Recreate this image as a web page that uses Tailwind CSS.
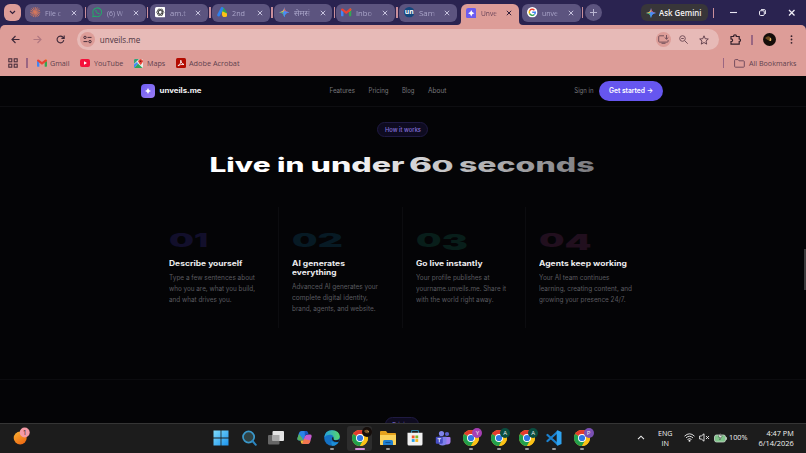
<!DOCTYPE html>
<html lang="en">
<head>
    <meta charset="UTF-8">
    <meta name="viewport" content="width=device-width, initial-scale=1.0">
    <title>unveils.me</title>
    <script src="https://cdn.jsdelivr.net/npm/@tailwindcss/browser@4"></script>
</head>
<body class="w-[806px] h-[453px] overflow-hidden flex flex-col bg-[#040406] font-['Open_Sans','Noto_Sans',sans-serif]">

<!-- Shared icons -->
<svg class="hidden">
    <symbol id="close" viewBox="0 0 6 6"><path d="M.8.8l4.4 4.4M5.2.8L.8 5.2" stroke="currentColor" stroke-width="1" fill="none"/></symbol>
    <symbol id="gemini" viewBox="0 0 12 12">
        <path d="M6 0Q6.6 5.4 12 6Q6.6 6.6 6 12Q5.4 6.6 0 6Q5.4 5.4 6 0Z" fill="#4b8bf4"/>
        <path d="M6 0Q6.6 5.4 12 6H6Z" fill="#e8505b"/>
        <path d="M6 1.5Q5.4 5.4 0 6L6 6.6Z" fill="#f2b83a"/>
        <path d="M0 6Q5.4 6.6 6 12V6Z" fill="#45b36b"/>
        <path d="M6 4Q7 5.2 12 6Q6.6 6.6 6 12Q5 8 4.5 6Z" fill="#4b8bf4"/>
    </symbol>
    <symbol id="gmail" viewBox="0 0 12 9">
        <path d="M0 1.5V8.2Q0 9 .8 9H2.8V3.6Z" fill="#4285f4"/>
        <path d="M12 1.5V8.2Q12 9 11.2 9H9.2V3.6Z" fill="#34a853"/>
        <path d="M9.2.8V4L12 2V1.4Q11.5-.6 9.2.8Z" fill="#fbbc04"/>
        <path d="M0 1.4V2L6 6.5L12 2V1.4Q11.2-.6 9.6.6L6 3.3L2.4.6Q.6-.6 0 1.4Z" fill="#ea4335"/>
    </symbol>
    <symbol id="chrome" viewBox="0 0 16 16">
        <circle cx="8" cy="8" r="8" fill="#fbc116"/>
        <path d="M1.07 4A8 8 0 0 1 14.93 4L8 8Z" fill="#e33b2e"/>
        <path d="M1.07 4A8 8 0 0 0 8 16L11.4 10L8 8Z" fill="#22a04c"/>
        <path d="M8 4H14.93A8 8 0 0 1 8 16L11.5 10Z" fill="#fbc116"/>
        <circle cx="8" cy="8" r="4" fill="#fff"/>
        <circle cx="8" cy="8" r="3.1" fill="#2f77e6"/>
    </symbol>
    <symbol id="spark" viewBox="0 0 8 8"><path d="M4 0Q4.700 3.300 8 4Q4.700 4.700 4 8Q3.300 4.700 0 4Q3.300 3.300 4 0Z" fill="#fff"/></symbol>
    <symbol id="tab-claude" viewBox="0 0 10 10"><path d="M5 0v10M0 5h10M1.4 1.4l7.2 7.2M8.6 1.4L1.4 8.6M3 .4l4 9.2M7 .4L3 9.6M.4 3l9.2 4M.4 7l9.2-4" stroke="#d8785c" stroke-width=".8"/></symbol>
    <symbol id="tab-whatsapp" viewBox="0 0 11 11"><path d="M.7 10.3l.7-2.6A4.6 4.6 0 1 1 3.3 9.6Z" fill="none" stroke="#25a66a" stroke-width="1.1"/><path d="M3.6 3.2q.8-.7 1.1.3q.5.8-.1 1q.6 1.3 1.9 1.9q.5-.8 1.5.1q.2.9-.9 1.2Q4.1 7.2 3.3 4Z" fill="#25a66a"/></symbol>
    <symbol id="tab-gpt" viewBox="0 0 10 10"><rect width="10" height="10" rx="1.6" fill="#fff"/><g fill="none" stroke="#222" stroke-width=".6"><ellipse cx="5" cy="5" rx="3.5" ry="1.7"/><ellipse cx="5" cy="5" rx="3.5" ry="1.7" transform="rotate(60 5 5)"/><ellipse cx="5" cy="5" rx="3.5" ry="1.7" transform="rotate(120 5 5)"/></g></symbol>
    <symbol id="tab-ads" viewBox="0 0 10 10"><path d="M4 .6Q5.300-.4 6.500.8L9.800 6L7 8L3.600 3Z" fill="#2fa84f"/><path d="M4.800 1.500L1.600 7.500" stroke="#2f80ed" stroke-width="2.800" stroke-linecap="round"/><path d="M5.200 4L9.700 6.200Q10.300 9 8 9.500H6Q3.800 8 5.200 4Z" fill="#fbc116"/></symbol>
    <symbol id="tab-un" viewBox="0 0 10 10"><circle cx="5" cy="5" r="5" fill="#14477d"/><text x="5" y="6.900" font-size="6.500" font-weight="700" fill="#fff" text-anchor="middle">un</text></symbol>
    <symbol id="tab-unveils" viewBox="0 0 10 10"><rect width="10" height="10" rx="2.200" fill="#6b5cf0"/><path d="M5 2Q5.500 4.500 8 5Q5.500 5.500 5 8Q4.500 5.500 2 5Q4.500 4.500 5 2Z" fill="#fff"/></symbol>
    <symbol id="tab-google" viewBox="0 0 11 11"><circle cx="5.5" cy="5.5" r="5.5" fill="#fff"/><g fill="none" stroke-width="1.500"><path d="M7.800 3.400A3.200 3.200 0 0 0 2.700 4" stroke="#ea4335"/><path d="M2.700 4A3.200 3.200 0 0 0 2.700 7" stroke="#fbbc04"/><path d="M2.700 7A3.200 3.200 0 0 0 7.700 7.900" stroke="#34a853"/><path d="M7.700 7.900Q8.700 7 8.700 5.500H5.500" stroke="#4285f4"/></g></symbol>
</svg>

<!-- Tab strip -->
<div class="h-[25px] shrink-0 bg-[#2a2350] flex items-center pl-1 text-[7.5px] text-[#aaa5c9]">
    <button class="size-[17px] rounded-[6px] bg-[#dd9d98] flex items-center justify-center shrink-0 mr-1">
        <svg class="w-[7px] h-[5px]" viewBox="0 0 7 5"><path d="M1 1l2.5 2.5L6 1" fill="none" stroke="#33203a" stroke-width="1.2"/></svg>
    </button>

    <div id="tabs" class="h-full flex items-center shrink-0"></div>

    <button class="size-[17px] rounded-full bg-[#5c547f] flex items-center justify-center shrink-0">
        <svg class="size-[7px]" viewBox="0 0 7 7"><path d="M3.5 0v7M0 3.5h7" stroke="#b9b5d0"/></svg>
    </button>

    <!-- window controls -->
    <div class="ml-auto flex items-center">
        <div class="w-[67.5px] h-[17px] rounded-[6px] bg-[#383639] flex items-center pl-[5px]">
            <svg class="size-[10px] shrink-0"><use href="#gemini"/></svg>
            <svg class="w-[43px] h-[12px] ml-[3px]" viewBox="0 0 43 12"><text x="0" y="8.700" font-size="8" font-weight="600" fill="#f1f0f2" textLength="42.500" lengthAdjust="spacingAndGlyphs">Ask Gemini</text></svg>
        </div>
        <i class="w-[1.5px] h-[10px] bg-[#c98f9b] ml-[4.5px]"></i>
        <svg class="w-[7px] h-[7px] ml-[16px]" viewBox="0 0 7 7"><path d="M0 3.500h7" stroke="#e9e7f2" stroke-width="1.100"/></svg>
        <svg class="size-[7px] ml-[22px]" viewBox="0 0 7 7"><rect x=".5" y="1.700" width="4.800" height="4.800" rx="1.200" fill="none" stroke="#e9e7f2"/><path d="M2 .5H5Q6.500.5 6.500 2V5" fill="none" stroke="#e9e7f2" stroke-width=".9"/></svg>
        <svg class="size-[7.5px] ml-[21.5px] mr-[11px] text-[#f1eff8]"><use href="#close"/></svg>
    </div>
</div>

<!-- Browser toolbar -->
<div class="bg-[#2a2350] shrink-0">
    <div class="h-[51px] bg-[#dd9d98] rounded-t-[5px] text-[#5d3f4d]">
        <div class="h-[29px] flex items-center">
            <svg class="size-[9px] ml-[10.5px]" viewBox="0 0 9 9"><path d="M8.500 4.500H1M4.500 1L1 4.500L4.500 8" fill="none" stroke="#3d2838" stroke-width="1.100"/></svg>
            <svg class="size-[9px] ml-[13.5px]" viewBox="0 0 9 9"><path d="M.5 4.500H8M4.500 1L8 4.500L4.500 8" fill="none" stroke="#b07780" stroke-width="1.100"/></svg>
            <svg class="size-[9px] ml-[13.5px]" viewBox="0 0 9 9"><path d="M7.800 5.200A3.400 3.400 0 1 1 7 2.200L8 3.200M8.200.6V3.400H5.400" fill="none" stroke="#3d2838" stroke-width="1.100"/></svg>
            <div class="w-[642.5px] h-[21.5px] ml-[12px] rounded-full bg-[#e7bab7] flex items-center pl-[3px]">
                <span class="size-[15px] rounded-full bg-[#dd9d98] flex items-center justify-center">
                    <svg class="size-[9px]" viewBox="0 0 9 9"><g fill="none" stroke="#4a2f3c" stroke-width="1"><circle cx="2" cy="2.400" r="1.200"/><path d="M4.500 2.400H8.500M.5 6.600H4.500"/><circle cx="7" cy="6.600" r="1.200"/></g></svg>
                </span>
                <svg class="w-[50px] h-[14px] ml-[4px]" viewBox="0 0 50 14"><text x=".8" y="10" font-size="8.600" fill="#4d3442" textLength="40.500" lengthAdjust="spacingAndGlyphs">unveils.me</text></svg>
                <span class="ml-auto size-[15px] rounded-full bg-[#dd9d98] flex items-center justify-center">
                    <svg class="w-[11px] h-[9px]" viewBox="0 0 11 9"><path d="M6 .8H1.500Q.7.800.7 1.600V6.300Q.7 7.100 1.500 7.100H9.300Q10.100 7.100 10.100 6.300V5M3.500 8.300H7.500M8.500 0V4M6.700 2.500L8.500 4.200L10.300 2.500" fill="none" stroke="#74505a" stroke-width="1"/></svg>
                </span>
                <svg class="size-[9px] ml-[8px]" viewBox="0 0 9 9"><g fill="none" stroke="#74505a"><circle cx="3.500" cy="3.500" r="2.800"/><path d="M5.600 5.600L8.700 8.700M2.200 3.500H4.800"/></g></svg>
                <svg class="size-[10px] ml-[11px] mr-[10.5px]" viewBox="0 0 10 10"><path d="M5 .8L6.200 3.700L9.300 4L7 6L7.700 9.100L5 7.500L2.300 9.100L3 6L.7 4L3.800 3.700Z" fill="none" stroke="#5a3a47" stroke-width=".9"/></svg>
            </div>
            <svg class="size-[11px] ml-[11px]" viewBox="0 0 11 11"><path d="M1 2.500H3.700Q3.600.8 5 .8T6.300 2.500H9.200V5Q10.500 5 10.500 6.200T9.200 7.500V10.200H1V7.700Q2.600 7.700 2.600 6.300T1 4.900Z" fill="none" stroke="#33202b" stroke-width="1.200"/></svg>
            <i class="w-[1.5px] h-[10px] bg-[#9a6682] ml-[10px]"></i>
            <svg class="size-[13px] ml-[10px]" viewBox="0 0 13 13"><circle cx="6.500" cy="6.500" r="6.500" fill="#150d0a"/><path d="M2 5Q5 2 7 4L7 8Q4 7 2 5Z" fill="#6b4a20"/><path d="M7 4.500Q9 5 8 8L6.500 8Z" fill="#e2b061"/></svg>
            <svg class="w-[3px] h-[9px] ml-[14.5px]" viewBox="0 0 3 9"><g fill="#33202b"><circle cx="1.500" cy="1.200" r=".9"/><circle cx="1.500" cy="4.500" r=".9"/><circle cx="1.500" cy="7.800" r=".9"/></g></svg>
        </div>
        <div class="h-[20px] pb-[2px] flex items-center">
            <svg class="size-[10px] ml-[7.5px]" viewBox="0 0 10 10"><g fill="none" stroke="#4a2f3c" stroke-width="1.100"><rect x=".8" y=".8" width="3" height="3"/><rect x="6.200" y=".8" width="3" height="3"/><rect x=".8" y="6.200" width="3" height="3"/><rect x="6.200" y="6.200" width="3" height="3"/></g></svg>
            <i class="w-[1.5px] h-[10px] bg-[#9a6682] ml-[8.5px]"></i>
            <svg class="w-[10px] h-[8px] ml-[9px]"><use href="#gmail"/></svg>
            <svg class="w-[20px] h-[12px] ml-[3.5px]" viewBox="0 0 20 12"><text x="0" y="8.700" font-size="7.500" fill="#5d3f4d" textLength="19.500" lengthAdjust="spacingAndGlyphs">Gmail</text></svg>
            <svg class="w-[10px] h-[8px] ml-[10px]" viewBox="0 0 10 8"><rect width="10" height="8" rx="2" fill="#f5103a"/><path d="M4 2.300L7 4L4 5.700Z" fill="#fff"/></svg>
            <svg class="w-[30px] h-[12px] ml-[3.5px]" viewBox="0 0 30 12"><text x="0" y="8.700" font-size="7.500" fill="#5d3f4d" textLength="29.300" lengthAdjust="spacingAndGlyphs">YouTube</text></svg>
            <svg class="size-[9px] ml-[10.5px]" viewBox="0 0 9 9"><rect width="9" height="9" rx="1.200" fill="#e9efe9"/><path d="M0 1Q0 0 1 0H5L0 5Z" fill="#34a07a"/><path d="M0 9L4 4.500L8.500 9Z" fill="#2fa45a"/><path d="M0 5.500L3 3L4 4.500L0 9Z" fill="#4285f4"/><path d="M6.500 0Q9 .2 9 2.300Q8.500 4 6.700 6Q4.500 4 4.300 2.300Q4.300.2 6.500 0Z" fill="#e8453a"/><circle cx="6.600" cy="2.200" r=".8" fill="#7d1712"/></svg>
            <svg class="w-[20px] h-[12px] ml-[4px]" viewBox="0 0 20 12"><text x="0" y="8.700" font-size="7.500" fill="#5d3f4d" textLength="18.300" lengthAdjust="spacingAndGlyphs">Maps</text></svg>
            <svg class="size-[10px] ml-[8.5px]" viewBox="0 0 10 10"><rect width="10" height="10" rx="1.500" fill="#b30b00"/><path d="M2 7.800Q5.500 5.500 4.800 2.200Q5 5.800 8 6.500Q4.500 6 2 7.800Z" fill="none" stroke="#fff" stroke-width=".8"/></svg>
            <svg class="w-[52px] h-[12px] ml-[3.5px]" viewBox="0 0 52 12"><text x="0" y="8.700" font-size="7.500" fill="#5d3f4d" textLength="50.500" lengthAdjust="spacingAndGlyphs">Adobe Acrobat</text></svg>
            <i class="w-[1.5px] h-[10px] bg-[#9a6682] ml-auto"></i>
            <svg class="w-[11px] h-[9px] ml-[10px]" viewBox="0 0 11 9"><path d="M.6 1.400Q.6.600 1.400.6H4L5 1.800H9.500Q10.300 1.800 10.300 2.600V7.400Q10.300 8.200 9.500 8.200H1.400Q.6 8.200.6 7.400Z" fill="none" stroke="#744d5e"/></svg>
            <svg class="w-[50px] h-[12px] ml-[3px] mr-[8px]" viewBox="0 0 50 12"><text x="1" y="8.700" font-size="7.500" fill="#5d3f4d" textLength="47.500" lengthAdjust="spacingAndGlyphs">All Bookmarks</text></svg>
        </div>
    </div>
</div>

<!-- Page -->
<main class="relative h-[347px] shrink-0 overflow-hidden bg-[#040406] font-[Inter,sans-serif]">
    <nav class="h-[30.5px] border-b border-[#0e0e11] flex items-center pl-[141px]">
        <span class="size-[14px] rounded-[4px] bg-linear-to-br from-[#6d5cf2] to-[#9b7cf5] flex items-center justify-center"><svg class="size-[6px]"><use href="#spark"/></svg></span>
        <svg class="w-[44px] h-[14px] ml-[4px]" viewBox="0 0 44 14"><text x=".5" y="9.300" font-size="6.900" font-weight="700" fill="#f2f2f4" textLength="42" lengthAdjust="spacingAndGlyphs">unveils.me</text></svg>
        <svg class="w-[120px] h-[14px] ml-[126px]" viewBox="0 0 120 14" font-size="6.900" fill="#77777c">
            <text x=".5" y="9.300" textLength="25.500" lengthAdjust="spacingAndGlyphs">Features</text>
            <text x="39.500" y="9.300" textLength="20" lengthAdjust="spacingAndGlyphs">Pricing</text>
            <text x="73" y="9.300" textLength="12.500" lengthAdjust="spacingAndGlyphs">Blog</text>
            <text x="99" y="9.300" textLength="18.500" lengthAdjust="spacingAndGlyphs">About</text>
        </svg>
        <svg class="w-[22px] h-[14px] ml-[124px]" viewBox="0 0 22 14"><text x="1.300" y="9.300" font-size="6.900" fill="#77777c" textLength="19.200" lengthAdjust="spacingAndGlyphs">Sign in</text></svg>
        <a class="w-[64.5px] h-[20px] rounded-full bg-[#6656ef] ml-[3.5px] flex items-center justify-center">
            <svg class="w-[46px] h-[14px]" viewBox="0 0 46 14"><text x="1" y="9.300" font-size="6.900" font-weight="600" fill="#fff" textLength="44" lengthAdjust="spacingAndGlyphs">Get started →</text></svg>
        </a>
    </nav>

    <section class="h-[273px] border-b border-[#0c0c0f] pt-[15.5px] flex flex-col">
        <div class="w-[51px] h-[15px] ml-[377px] rounded-full border border-[#1f1a42] bg-[#0e0b20] flex items-center justify-center">
            <svg class="w-[38px] h-[10px]" viewBox="0 0 38 10"><text x="1" y="7.200" font-size="6" font-weight="500" fill="#8672dc" textLength="36" lengthAdjust="spacingAndGlyphs">How it works</text></svg>
        </div>
        <h2 class="mt-[13px]">
            <svg class="w-[806px] h-[30px]" viewBox="0 0 806 30" font-weight="800" font-size="20">
                <defs><linearGradient id="fade" gradientUnits="userSpaceOnUse" x1="211" y1="0" x2="596" y2="60"><stop offset=".3" stop-color="#fff"/><stop offset="1" stop-color="#77777b"/></linearGradient></defs>
                <g fill="url(#fade)">
                    <text x="209.500" y="21.600" textLength="95" lengthAdjust="spacingAndGlyphs">Live in</text>
                    <text x="310.500" y="21.600" textLength="94" lengthAdjust="spacingAndGlyphs">under</text>
                    <text x="409" y="21.600" textLength="23" lengthAdjust="spacingAndGlyphs">6</text>
                    <text x="431.500" y="21.600" font-size="16" textLength="22" lengthAdjust="spacingAndGlyphs">0</text>
                    <text x="459" y="21.600" textLength="135.500" lengthAdjust="spacingAndGlyphs">seconds</text>
                </g>
            </svg>
        </h2>

        <div class="mt-[27px] ml-[156px] grid grid-cols-[repeat(4,123.3px)] h-[121px]">
            <div class="border-r border-[#0c0c0f] pl-[13px] pt-[20px]">
                <svg class="w-[105px] h-[82px]" viewBox="0 0 105 82">
                    <g font-size="18.500" font-weight="900" fill="#120f2b"><text x="0" y="19.500" textLength="25" lengthAdjust="spacingAndGlyphs">0</text><text x="25" y="19.500" textLength="14" lengthAdjust="spacingAndGlyphs">1</text></g>
                    <text x="0" y="38.500" font-size="7.200" font-weight="700" fill="#ececef" textLength="73.500" lengthAdjust="spacingAndGlyphs">Describe yourself</text>
                    <g font-size="6.900" fill="#5b5b60"><text x="0" y="53" textLength="86" lengthAdjust="spacingAndGlyphs">Type a few sentences about</text><text x="0" y="64.200" textLength="86" lengthAdjust="spacingAndGlyphs">who you are, what you build,</text><text x="0" y="75.200" textLength="62.500" lengthAdjust="spacingAndGlyphs">and what drives you.</text></g>
                </svg>
            </div>
            <div class="border-r border-[#0c0c0f] pl-[13px] pt-[20px]">
                <svg class="w-[105px] h-[92px]" viewBox="0 0 105 92">
                    <g font-size="18.500" font-weight="900" fill="#071a24"><text x="0" y="19.500" textLength="25.500" lengthAdjust="spacingAndGlyphs">0</text><text x="25.500" y="19.500" textLength="25.500" lengthAdjust="spacingAndGlyphs">2</text></g>
                    <g font-size="7.200" font-weight="700" fill="#ececef"><text x="0" y="38.500" textLength="53" lengthAdjust="spacingAndGlyphs">AI generates</text><text x="0" y="47.600" textLength="44.500" lengthAdjust="spacingAndGlyphs">everything</text></g>
                    <g font-size="6.900" fill="#5b5b60"><text x="0" y="62" textLength="86" lengthAdjust="spacingAndGlyphs">Advanced AI generates your</text><text x="0" y="73.200" textLength="76" lengthAdjust="spacingAndGlyphs">complete digital identity,</text><text x="0" y="84.400" textLength="83.500" lengthAdjust="spacingAndGlyphs">brand, agents, and website.</text></g>
                </svg>
            </div>
            <div class="border-r border-[#0c0c0f] pl-[13px] pt-[20px]">
                <svg class="w-[105px] h-[82px]" viewBox="0 0 105 82">
                    <g font-size="18.500" font-weight="900" fill="#081e1a"><text x="0" y="19.500" textLength="25.500" lengthAdjust="spacingAndGlyphs">0</text><text x="25.500" y="22.500" font-size="22" textLength="26.500" lengthAdjust="spacingAndGlyphs">3</text></g>
                    <text x="0" y="38.500" font-size="7.200" font-weight="700" fill="#ececef" textLength="66.500" lengthAdjust="spacingAndGlyphs">Go live instantly</text>
                    <g font-size="6.900" fill="#5b5b60"><text x="0" y="53" textLength="73.500" lengthAdjust="spacingAndGlyphs">Your profile publishes at</text><text x="0" y="64.200" textLength="90" lengthAdjust="spacingAndGlyphs">yourname.unveils.me. Share it</text><text x="0" y="75.200" textLength="77.500" lengthAdjust="spacingAndGlyphs">with the world right away.</text></g>
                </svg>
            </div>
            <div class="pl-[13px] pt-[20px]">
                <svg class="w-[105px] h-[82px]" viewBox="0 0 105 82">
                    <g font-size="18.500" font-weight="900" fill="#210f1e"><text x="0" y="19.500" textLength="25.500" lengthAdjust="spacingAndGlyphs">0</text><text x="25.500" y="22.500" font-size="22" textLength="27" lengthAdjust="spacingAndGlyphs">4</text></g>
                    <text x="0" y="38.500" font-size="7.200" font-weight="700" fill="#ececef" textLength="88" lengthAdjust="spacingAndGlyphs">Agents keep working</text>
                    <g font-size="6.900" fill="#5b5b60"><text x="0" y="53" textLength="70.500" lengthAdjust="spacingAndGlyphs">Your AI team continues</text><text x="0" y="64.200" textLength="93" lengthAdjust="spacingAndGlyphs">learning, creating content, and</text><text x="0" y="75.200" textLength="86.500" lengthAdjust="spacingAndGlyphs">growing your presence 24/7.</text></g>
                </svg>
            </div>
        </div>
    </section>

    <div class="w-[34px] h-[15px] mt-[37.5px] ml-[385px] rounded-full border border-[#1f1a42] bg-[#0e0b20] text-[6px] leading-[13px] text-center text-[#8672dc]">Pricing</div>
    <!-- scrollbar thumb -->
    <div class="absolute right-0 top-[173px] w-[2px] h-[41px] bg-[#3a3a3c]"></div>
</main>

<!-- Taskbar -->
<footer class="h-[30px] shrink-0 bg-[#1c1c1c] border-t border-[#353535] flex items-center pb-[1.5px] text-white">
    <div class="w-[207px] pl-[13px] pb-[3px] shrink-0">
        <svg class="size-[18px]" viewBox="0 0 18 18"><defs><linearGradient id="sun" x2=".6" y2="1"><stop stop-color="#f9b233"/><stop offset="1" stop-color="#ee6c14"/></linearGradient></defs><circle cx="7.200" cy="11" r="6.500" fill="url(#sun)"/><circle cx="11.700" cy="5.500" r="5" fill="#f49aa6"/><text x="11.700" y="8" font-size="7" fill="#3a1a22" text-anchor="middle">1</text></svg>
    </div>

    <div class="w-[27.8px] flex justify-center shrink-0">
        <svg class="size-[16px]" viewBox="0 0 16 16"><defs><linearGradient id="win" x2="1" y2="1"><stop stop-color="#7fdcfb"/><stop offset="1" stop-color="#1b93ee"/></linearGradient></defs><path d="M.5.5H7.600V7.600H.5ZM8.400.5H15.500V7.600H8.400ZM.5 8.400H7.600V15.500H.5ZM8.400 8.400H15.500V15.500H8.400Z" fill="url(#win)"/></svg>
    </div>
    <div class="w-[27.8px] flex justify-center shrink-0">
        <svg class="size-[16px]" viewBox="0 0 16 16"><circle cx="7.600" cy="7" r="5.600" fill="#304244" stroke="#3a97c9" stroke-width="1.700"/><path d="M11.500 11L14.800 14.800" stroke="#2b85c0" stroke-width="2" stroke-linecap="round"/></svg>
    </div>
    <div class="w-[27.8px] flex justify-center shrink-0">
        <svg class="size-[16px]" viewBox="0 0 16 16"><rect x="0" y="5" width="11.500" height="9.500" rx="1" fill="#666"/><rect x="4.500" y="1" width="11.500" height="10" rx="1" fill="#e4e4e4"/><path d="M4.500 5H11.500V11H4.500Z" fill="#a9a9a9"/></svg>
    </div>
    <div class="w-[27.8px] flex justify-center shrink-0">
        <svg class="size-[15px]" viewBox="0 0 15 15"><path d="M4.500 1H9.500L7.500 8Q7 10.500 4.500 10.500H2Q-.2 10.500.5 8L2 3Q2.600 1 4.500 1Z" fill="#2b84e8"/><path d="M.5 8L2 4L6 9Q5 10.500 3 10.500Q0 10.800.5 8Z" fill="#58b05c"/><path d="M10.500 14H5.500L7.500 7Q8 4.500 10.500 4.500H13Q15.200 4.500 14.500 7L13 12Q12.400 14 10.500 14Z" fill="#c65ad0"/><path d="M5.500 14L7 9L13.500 10.500L13 12Q12.400 14 10.500 14Z" fill="#f2764f"/><path d="M7.500 1H9.500Q11 1 11.500 4.500H10Q8.500 4.500 8 6Z" fill="#1b57c4"/><path d="M5.500 14Q4 14 3.500 10.500H5Q6.500 10.500 7 8.500Z" fill="#f0bd3a"/></svg>
    </div>
    <div class="relative w-[27.8px] h-full flex items-center justify-center shrink-0">
        <svg class="size-[16px]" viewBox="0 0 16 16"><defs><linearGradient id="edge" x2="1"><stop stop-color="#239fdf"/><stop offset="1" stop-color="#58d86a"/></linearGradient></defs><circle cx="8" cy="8" r="7.800" fill="#1471c4"/><path d="M.2 7.500Q1 .2 8 .2Q15.500.5 15.800 6.500Q15.500 10 11.500 10Q9 10 9.500 8.500Q10 5.500 7 4.800Q2.500 4 .2 7.500Z" fill="url(#edge)"/><path d="M9.500 8.500Q9 10 11.500 10.200Q13.500 10.200 15.600 9.200L14.500 12Q10.500 12.500 8.500 10.500Q7.500 8.500 8.500 7Q10 7.200 9.500 8.500Z" fill="#1c1c1c"/><path d="M7.500 11Q10 13.500 14.500 12.200Q12 16 8 15.800Q7 13 7.500 11Z" fill="#1d8fd6"/></svg>
        <i class="absolute bottom-[1.5px] w-[4px] h-[2px] rounded-full bg-[#9a9a9a]"></i>
    </div>
    <div class="relative w-[27.8px] h-full flex items-center justify-center shrink-0">
        <span class="absolute inset-x-[1.5px] top-[1.5px] bottom-[.5px] rounded-[3px] bg-[#2d2d2d]"></span>
        <svg class="relative size-[16px]"><use href="#chrome"/></svg>
        <svg class="absolute right-[2px] top-[3px] size-[10px]" viewBox="0 0 10 10"><circle cx="5" cy="5" r="5" fill="#150d0a"/><path d="M2 4Q4 2 6 3L5.500 6.500Q3 6 2 4Z" fill="#7b5426"/><path d="M5.500 3.500L7 4L6 6.500Z" fill="#e2b061"/></svg>
        <i class="absolute bottom-[1.5px] w-[10px] h-[2px] rounded-full bg-[#d48fd8]"></i>
    </div>
    <div class="relative w-[27.8px] h-full flex items-center justify-center shrink-0">
        <svg class="size-[16px]" viewBox="0 0 16 16"><path d="M0 2Q0 1 1 1H6L7.500 3H15Q16 3 16 4V14Q16 15 15 15H1Q0 15 0 14Z" fill="#e5a21d"/><path d="M0 5H16V14Q16 15 15 15H1Q0 15 0 14Z" fill="#fbd35c"/><path d="M3 15V11.500Q3 10 4.500 10H11.500Q13 10 13 11.500V15Z" fill="#1f7fd0"/><path d="M5.500 12.500H10.500" stroke="#0d4f91"/></svg>
        <i class="absolute bottom-[1.5px] w-[4px] h-[2px] rounded-full bg-[#9a9a9a]"></i>
    </div>
    <div class="w-[27.8px] flex justify-center shrink-0">
        <svg class="size-[16px]" viewBox="0 0 16 16"><path d="M4.500 3V1.500Q4.500.5 5.500.5H10.500Q11.500.5 11.500 1.500V3" fill="none" stroke="#2c83a8" stroke-width="1.100"/><path d="M.5 2.800H15.500V14Q15.500 15.500 14 15.500H2Q.5 15.500.5 14Z" fill="#f1f1f1"/><path d="M4.800 5.500H7.600V8.300H4.800Z" fill="#f2542d"/><path d="M8.400 5.500H11.200V8.300H8.400Z" fill="#7fb928"/><path d="M4.800 9.100H7.600V11.900H4.800Z" fill="#23a2ea"/><path d="M8.400 9.100H11.200V11.900H8.400Z" fill="#f8b51b"/></svg>
    </div>
    <div class="w-[27.8px] flex justify-center shrink-0">
        <svg class="size-[16px]" viewBox="0 0 16 16"><circle cx="6.500" cy="3.500" r="2.600" fill="#7f83ec"/><circle cx="12" cy="4" r="2.100" fill="#5c62d1"/><path d="M10 7H14.500Q15.500 7 15.500 8V11.500Q15.500 14.500 12 14.500H9Z" fill="#a37df0"/><path d="M4 6.800H11.500V11.500Q11.500 15.500 7.500 15.500T3.500 12Z" fill="#7d80ea"/><rect x=".8" y="6.800" width="7" height="7" rx="1" fill="#454cc4"/><path d="M2.500 8.700H6.200M4.300 8.700V12.300" stroke="#fff" stroke-width=".8"/></svg>
    </div>
    <div class="relative w-[27.8px] h-full flex items-center justify-center shrink-0">
        <svg class="size-[16px]"><use href="#chrome"/></svg>
        <span class="absolute right-[2.5px] top-[3.5px] size-[10px] rounded-full bg-[#a63fb4] text-[#eee] text-[6px] leading-[10px] text-center">Y</span>
        <i class="absolute bottom-[1.5px] w-[4px] h-[2px] rounded-full bg-[#9a9a9a]"></i>
    </div>
    <div class="relative w-[27.8px] h-full flex items-center justify-center shrink-0">
        <svg class="size-[16px]"><use href="#chrome"/></svg>
        <span class="absolute right-[2.5px] top-[3.5px] size-[10px] rounded-full bg-[#0a4d40] text-[#eee] text-[6px] leading-[10px] text-center">A</span>
        <i class="absolute bottom-[1.5px] w-[4px] h-[2px] rounded-full bg-[#9a9a9a]"></i>
    </div>
    <div class="relative w-[27.8px] h-full flex items-center justify-center shrink-0">
        <svg class="size-[16px]"><use href="#chrome"/></svg>
        <span class="absolute right-[2.5px] top-[3.5px] size-[10px] rounded-full bg-[#0a4d40] text-[#eee] text-[6px] leading-[10px] text-center">A</span>
        <i class="absolute bottom-[1.5px] w-[4px] h-[2px] rounded-full bg-[#9a9a9a]"></i>
    </div>
    <div class="relative w-[27.8px] h-full flex items-center justify-center shrink-0">
        <svg class="size-[16px]" viewBox="0 0 16 16"><path d="M11.500 2L1.500 11M11.500 14L1.500 5" stroke="#1b81cf" stroke-width="2.300" stroke-linecap="round"/><path d="M11.500.3L15.500 2V14L11.500 15.700L10.700 15V1Z" fill="#2ea3f0"/></svg>
        <i class="absolute bottom-[1.5px] w-[4px] h-[2px] rounded-full bg-[#9a9a9a]"></i>
    </div>
    <div class="relative w-[27.8px] h-full flex items-center justify-center shrink-0">
        <svg class="size-[16px]"><use href="#chrome"/></svg>
        <span class="absolute right-[2.5px] top-[3.5px] size-[10px] rounded-full bg-[#7a50b4] text-[#eee] text-[6px] leading-[10px] text-center">P</span>
        <i class="absolute bottom-[1.5px] w-[4px] h-[2px] rounded-full bg-[#9a9a9a]"></i>
    </div>

    <!-- system tray -->
    <div class="ml-auto flex items-center pr-[12px]">
        <svg class="w-[8px] h-[5px]" viewBox="0 0 8 5"><path d="M1 4.200L4 1.200L7 4.200" fill="none" stroke="#eee" stroke-width="1.100"/></svg>
        <svg class="w-[16px] h-[24px] ml-[12.5px]" viewBox="0 0 16 24" font-size="7.500" fill="#f1f1f1"><text x="1" y="10" textLength="14.500" lengthAdjust="spacingAndGlyphs">ENG</text><text x="4.500" y="20" textLength="7.500" lengthAdjust="spacingAndGlyphs">IN</text></svg>
        <svg class="w-[11px] h-[9px] ml-[11px]" viewBox="0 0 11 9"><g fill="none" stroke="#eee" stroke-width=".9"><path d="M.5 3.200Q5.500-1.600 10.500 3.200M2 4.900Q5.500 1.600 9 4.900M3.500 6.500Q5.500 4.600 7.500 6.500"/></g><circle cx="5.500" cy="7.700" r="1" fill="#eee"/></svg>
        <svg class="w-[11px] h-[9px] ml-[3.5px]" viewBox="0 0 11 9"><path d="M.6 3H2.300L5 .8V8.200L2.300 6H.6ZM7 3L10 6M10 3L7 6" fill="none" stroke="#eee" stroke-width=".9"/></svg>
        <svg class="w-[13px] h-[10px] ml-[4.5px]" viewBox="0 0 13 10"><rect x=".5" y="2" width="11" height="7" rx="2" fill="#7fc48a" stroke="#c9d8cb" stroke-width=".8"/><path d="M12.400 4.200V6.800" stroke="#c9d8cb"/><path d="M6.300 0L4.300 4H6.300L5.700 7L8.300 2.800H6.500Z" fill="#fff" stroke="#1c1c1c" stroke-width=".4"/></svg>
        <svg class="w-[19px] h-[12px] ml-[2px]" viewBox="0 0 19 12"><text x="0" y="8.400" font-size="7.500" fill="#f1f1f1" textLength="18.500" lengthAdjust="spacingAndGlyphs">100%</text></svg>
        <svg class="w-[36px] h-[24px] ml-[10px]" viewBox="0 0 36 24" font-size="7.500" fill="#f1f1f1"><text x="8.500" y="9.500" textLength="27.300" lengthAdjust="spacingAndGlyphs">4:47 PM</text><text x=".5" y="19.500" textLength="35.300" lengthAdjust="spacingAndGlyphs">6/14/2026</text></svg>
    </div>
</footer>

<script>

    const tabList = [
        { icon: "tab-claude", title: "File c" },
        { icon: "tab-whatsapp", title: "(6) W" },
        { icon: "tab-gpt", title: "am.t" },
        { icon: "tab-ads", title: "2nd" },
        { icon: "gemini", title: "सेमसं" },
        { icon: "gmail", title: "Inbo" },
        { icon: "tab-un", title: "Sam" },
        { icon: "tab-unveils", title: "Unve", active: true },
        { icon: "tab-google", title: "unve" },
    ];

    const separator = `<i class="w-[1.5px] h-[11px] bg-[#c98f9b] mx-[1.25px] shrink-0"></i>`;

    // flared bottom corners of the active tab
    const corners = `
        <svg class="absolute -left-1 bottom-0 size-1" viewBox="0 0 4 4"><path d="M4 0V4H0Q4 4 4 0Z" fill="#dd9d98"/></svg>
        <svg class="absolute -right-1 bottom-0 size-1" viewBox="0 0 4 4"><path d="M0 0V4H4Q0 4 0 0Z" fill="#dd9d98"/></svg>`;

    let html = "";
    tabList.forEach((tab, i) => {
        const style = tab.active
            ? "relative w-[58.3px] h-[21px] self-end rounded-t-[6px] bg-[#dd9d98] flex items-center pl-[4.5px] pb-[3px] shrink-0 text-[#674257]"
            : "w-[58.3px] h-[18px] rounded-[6px] bg-[#5c547f] flex items-center pl-[5px] shrink-0";
        const close = tab.active ? "text-[#33203a]" : "text-[#c5c1dc]";
        html += `
        <div class="${style}">
            ${tab.active ? corners : ""}
            <svg class="size-[10.5px] shrink-0"><use href="#${tab.icon}"/></svg>
            <svg class="w-[18px] h-[12px] ml-[4.5px] shrink-0 mask-r-from-70%"><text x="0" y="8.700" font-size="7.400" fill="currentColor" textLength="${i === 3 ? 13 : 16}" lengthAdjust="spacingAndGlyphs">${tab.title}</text></svg>
            <svg class="size-[6px] ml-[7.5px] shrink-0 ${close}"><use href="#close"/></svg>
        </div>`;
        // no separator next to the active tab
        const nextActive = tabList[i + 1] && tabList[i + 1].active;
        html += tab.active ? `<i class="w-[3px] shrink-0"></i>` : nextActive ? `<i class="w-[4px] shrink-0"></i>` : separator;
    });
    document.getElementById("tabs").innerHTML = html;

</script>
</body>
</html>
